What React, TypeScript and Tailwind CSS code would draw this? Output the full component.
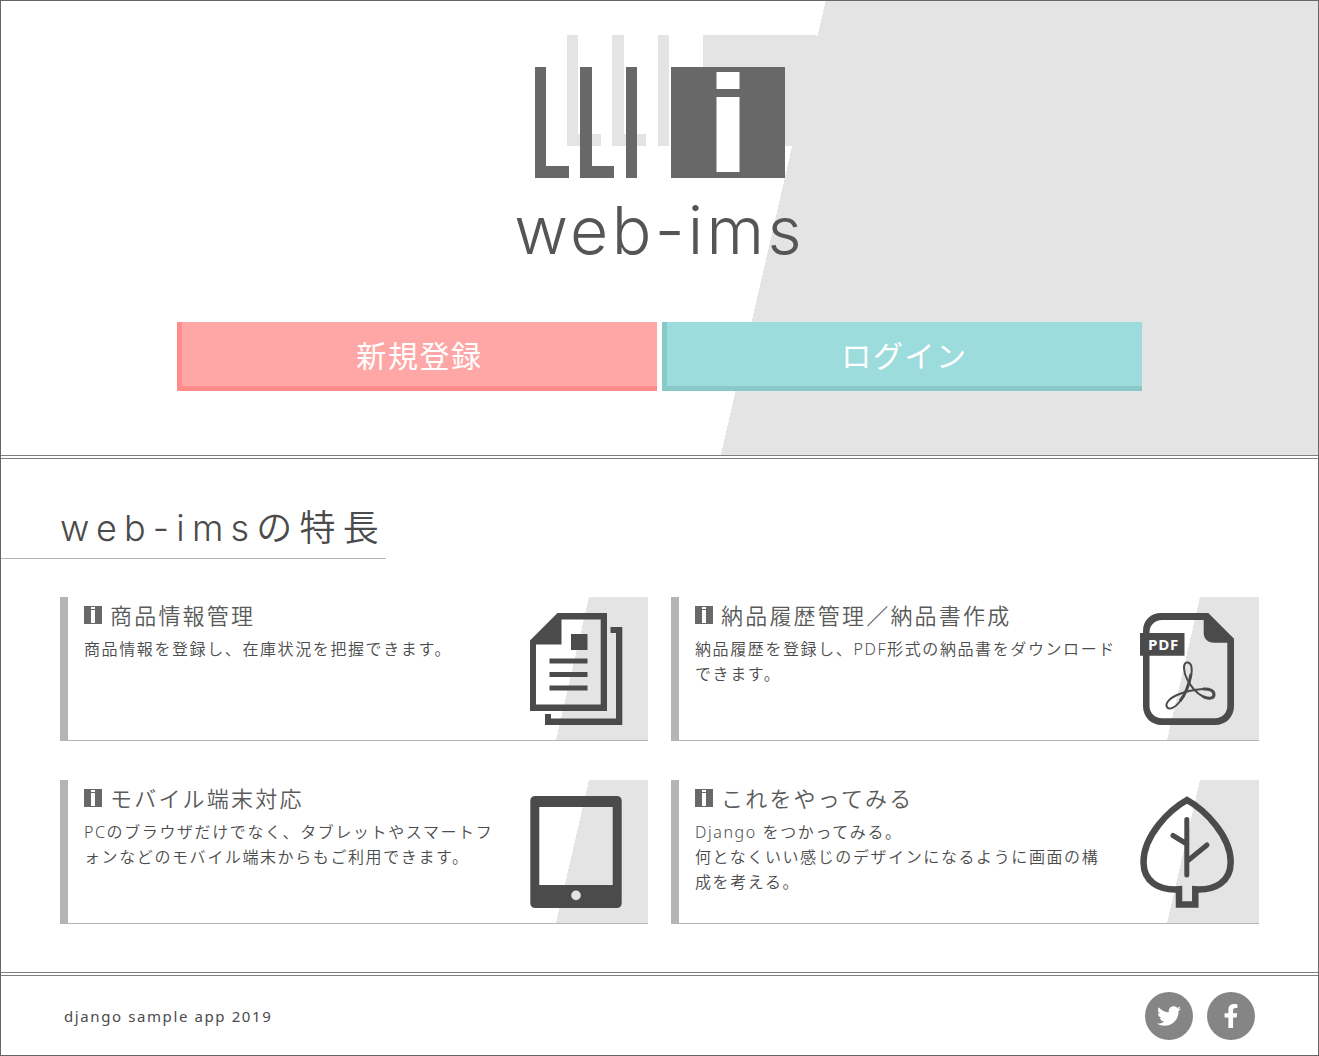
import React from "react";
import { FaFacebookF, FaTwitter } from "react-icons/fa";

function LogoShape({ className, hollow }: { className: string; hollow?: boolean }) {
  return (
    <g className={className}>
      <path d="M0 0H11V99H34V111H0Z" />
      <path d="M45 0H57V99H79V111H45Z" />
      <path d="M91 0H102V111H91Z" />
      <path d="M136 0H250V111H136Z" />
      {hollow && (
        <g className="fill-white">
          <path d="M181.5 5H204.5V22H181.5Z" />
          <path d="M181.5 30H204.5V105H181.5Z" />
        </g>
      )}
    </g>
  );
}

function Logo() {
  return (
    <svg viewBox="0 0 314 143" className="h-[143px] w-[314px]" aria-hidden="true">
      <g transform="translate(64 0)">
        <LogoShape className="fill-[#e4e4e4]" />
      </g>
      <g transform="translate(32 32)">
        <LogoShape className="fill-[#686868]" hollow />
      </g>
    </svg>
  );
}

function InfoMark() {
  return (
    <svg viewBox="0 0 18 18" className="size-[18px] shrink-0" aria-hidden="true">
      <path d="M0 0H18V18H0Z" className="fill-[#686868]" />
      <path d="M7 1H11V3H7ZM7 4H11V17H7Z" className="fill-white" />
    </svg>
  );
}

function DocumentsIcon() {
  return (
    <svg viewBox="0 0 112 112" className="size-28 fill-[#4b4b4b]" aria-hidden="true">
      <path
        fillRule="evenodd"
        d="M10 27.5L37.5 0H87V98H10ZM16 31.5V91.5H80.7V6.5H41.5V31.5Z"
      />
      <path d="M51 21H67.5V37H51ZM29.5 45.5H67.5V50.5H29.5ZM29.5 59H67.5V64H29.5ZM29.5 72.5H67.5V77.5H29.5Z" />
      <path d="M90.5 14H102.3V112H25V101H31V105.5H96V20H90.5Z" />
    </svg>
  );
}

function PdfIcon() {
  return (
    <svg viewBox="0 0 112 112" className="size-28" aria-hidden="true">
      <path
        className="fill-[#4b4b4b]"
        fillRule="evenodd"
        d="M30 0H77.3L103 25.7V93C103 104 95 112 84 112H31C20 112 12 104 12 93V18C12 7 20 0 30 0ZM31 7C24 7 18.5 12 18.5 19V93C18.5 100 24 105.2 31 105.2H84C91 105.2 96.3 100 96.3 93V29.7H83C77 29.7 72.7 26 72.7 20V7Z"
      />
      <path className="fill-[#4b4b4b]" d="M9 20H53.5V42.7H9Z" />
      <text
        x="17"
        y="36.5"
        className="fill-white font-['Open_Sans',sans-serif] text-[15px] font-bold tracking-wider"
      >
        PDF
      </text>
      <path
        className="fill-none stroke-[#4b4b4b] stroke-2"
        d="M56.3 49.5C61 49.5 61.5 57 60 63C58 72 54 82 48.5 89C44 95 38.5 97 36.3 94.5C33.5 91 38 85.5 46 82C55 78 64 76.5 72 76C79 75.5 83 78 83 81.5C83 85.5 78 86.5 72 83.5C65 80 59.5 73 56 66C53 60 51 49.5 56.3 49.5Z"
      />
      <path
        className="fill-none stroke-[#4b4b4b] stroke-[3px]"
        d="M60 61C58 72 54 82 49 88M72 76C79 75.5 83 78 83 81.5C83 85.5 78 86.5 72 83.5"
      />
    </svg>
  );
}

function TabletIcon() {
  return (
    <svg viewBox="0 0 112 112" className="size-28 fill-[#4b4b4b]" aria-hidden="true">
      <path
        fillRule="evenodd"
        d="M15.5 0H96.5Q101.7 0 101.7 5V107Q101.7 112 96.5 112H15.5Q10.3 112 10.3 107V5Q10.3 0 15.5 0ZM19.3 11V89H92.7V11ZM56 94.6A4.8 4.8 0 1 0 56 104.2A4.8 4.8 0 1 0 56 94.6Z"
      />
    </svg>
  );
}

function LeafIcon() {
  return (
    <svg viewBox="0 0 112 112" className="size-28 fill-none stroke-[#4b4b4b]" aria-hidden="true">
      <path
        strokeWidth="6.5"
        d="M56 4C38 14 12.5 40 12.5 66C12.5 86 28 94.5 48 93.3V108.5H64.3V93.3C84 94.5 99.7 86 99.7 66C99.7 40 74 14 56 4Z"
      />
      <path
        strokeWidth="5"
        strokeLinecap="round"
        d="M55.8 23.5V79M42 39.5L55.8 48M76 49L55.8 65.5"
      />
    </svg>
  );
}

type Feature = { title: string; lines: string[]; Icon: () => React.JSX.Element };

const features: Feature[] = [
  { title: "商品情報管理", lines: ["商品情報を登録し、在庫状況を把握できます。"], Icon: DocumentsIcon },
  {
    title: "納品履歴管理／納品書作成",
    lines: ["納品履歴を登録し、PDF形式の納品書をダウンロードできます。"],
    Icon: PdfIcon,
  },
  {
    title: "モバイル端末対応",
    lines: ["PCのブラウザだけでなく、タブレットやスマートフォンなどのモバイル端末からもご利用できます。"],
    Icon: TabletIcon,
  },
  {
    title: "これをやってみる",
    lines: ["Django をつかってみる。", "何となくいい感じのデザインになるように画面の構成を考える。"],
    Icon: LeafIcon,
  },
];

function FeatureCard({ title, lines, Icon }: Feature) {
  return (
    <article className="flex min-h-36 justify-between gap-[15px] border-b border-l-8 border-[#b5b5b5] bg-[linear-gradient(103deg,transparent_85%,#e4e4e4_85%)] pr-4 pl-4">
      <div className="min-w-0 flex-1">
        <h3 className="flex h-9 items-center gap-2 text-[22px] leading-9 tracking-widest text-[#5a5a5a]">
          <InfoMark />
          {title}
        </h3>
        <div className="mt-1 text-base leading-[25px]">
          {lines.map((line) => (
            <p key={line}>{line}</p>
          ))}
        </div>
      </div>
      <div className="shrink-0 pt-4">
        <Icon />
      </div>
    </article>
  );
}

export default function App() {
  return (
    <div className="border border-[#666] bg-white font-['Noto_Sans','Noto_Sans_CJK_JP',sans-serif] font-[350] tracking-widest text-[#4b4b4b]">
      <header className="flex flex-col items-center border-b-4 border-double border-[#808080] bg-[linear-gradient(103deg,transparent_58%,#e4e4e4_58%)] bg-clip-padding px-4 pt-[34px] pb-16">
        <Logo />
        <h1 className="mt-1 font-['Inter',sans-serif] text-[66px] leading-[96px] font-light tracking-wider text-[#555]">
          web-ims
        </h1>
        <nav className="mt-11 flex w-full max-w-[965px] gap-[5px] text-center text-[30px] leading-[60px] font-normal text-white">
          <a href="#signup" className="flex-1 border-b-5 border-l-5 border-[#ff8b8b] bg-[#ffa6a6] pt-1">
            新規登録
          </a>
          <a href="#login" className="flex-1 border-b-5 border-l-5 border-[#88c9c8] bg-[#9ddcdc] pt-1">
            ログイン
          </a>
        </nav>
      </header>

      <main className="pt-10 pb-12">
        <h2 className="w-fit border-b border-[#b5b5b5] pl-[59px] font-['Inter','Noto_Sans_CJK_JP',sans-serif] text-4xl leading-[59px] tracking-[0.2em]">
          web-imsの特長
        </h2>
        <div className="mx-[59px] mt-[38px] grid grid-cols-2 gap-x-[23px] gap-y-[39px]">
          {features.map((feature) => (
            <FeatureCard key={feature.title} {...feature} />
          ))}
        </div>
      </main>

      <footer className="flex items-center justify-between border-t-4 border-double border-[#808080] px-[63px] pt-4 pb-[15px]">
        <p className="text-[15px] font-normal">django sample app 2019</p>
        <div className="flex gap-3.5 text-2xl text-white">
          <a
            href="#twitter"
            aria-label="Twitter"
            className="flex size-12 items-center justify-center rounded-full bg-[#858585]"
          >
            <FaTwitter />
          </a>
          <a
            href="#facebook"
            aria-label="Facebook"
            className="flex size-12 items-center justify-center rounded-full bg-[#858585]"
          >
            <FaFacebookF />
          </a>
        </div>
      </footer>
    </div>
  );
}
